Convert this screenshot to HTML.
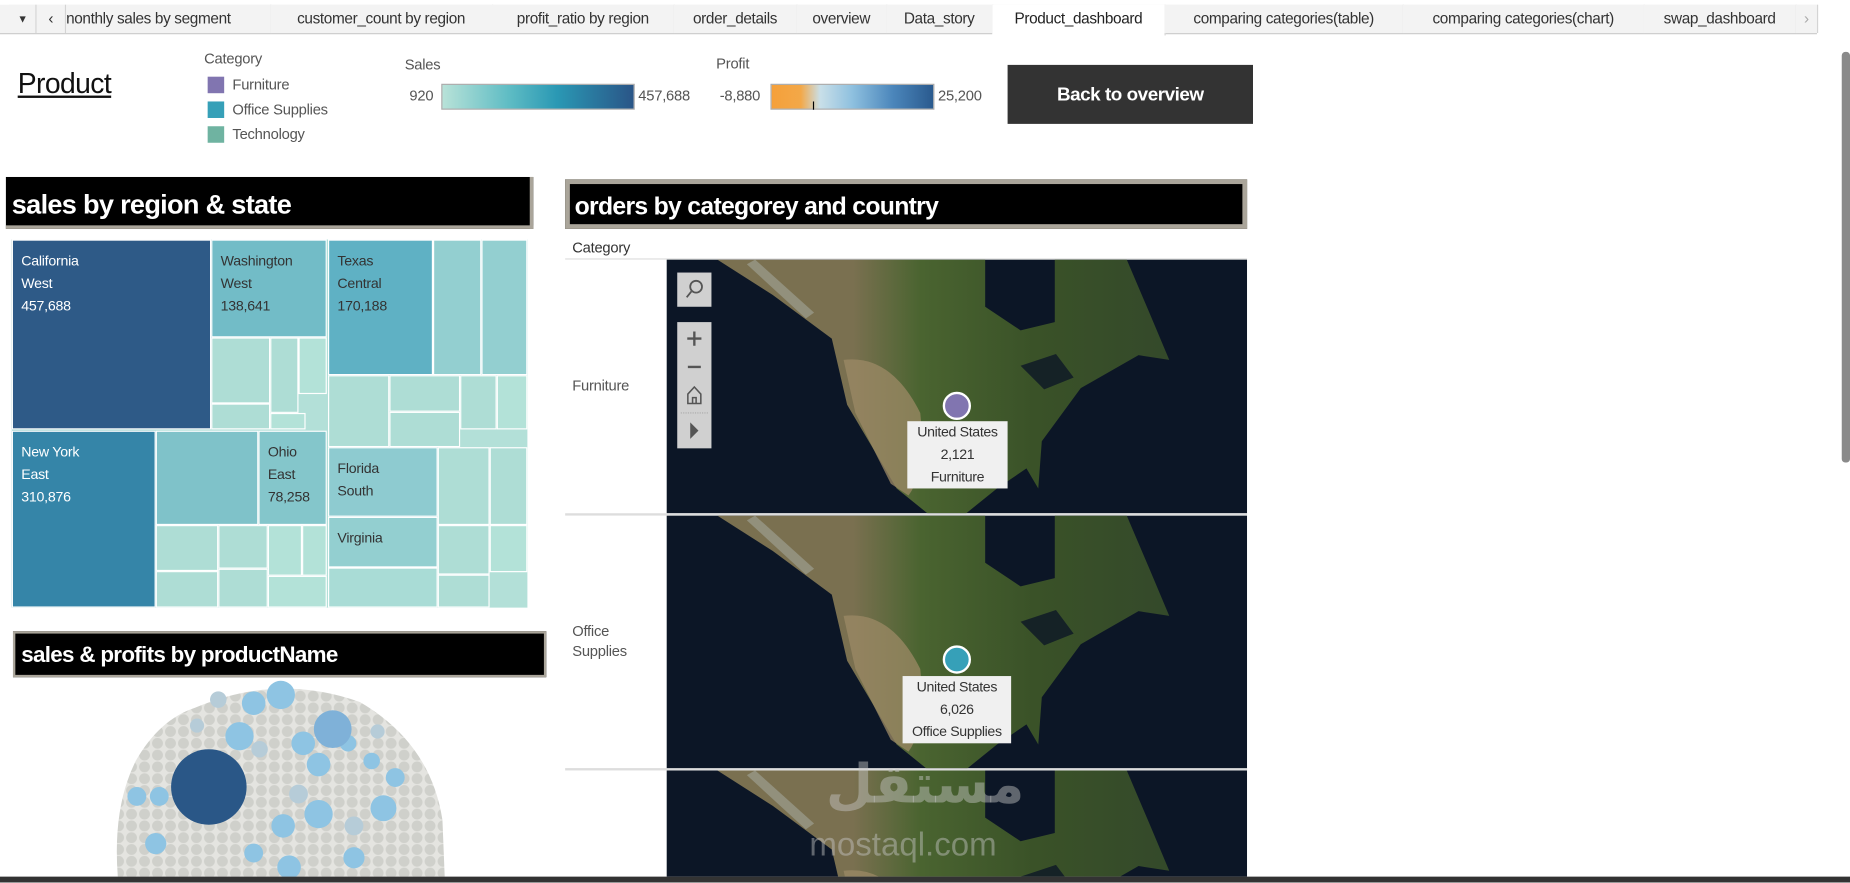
<!DOCTYPE html>
<html><head><meta charset="utf-8">
<style>
html,body{margin:0;padding:0;width:1850px;height:883px;overflow:hidden;background:#fff;font-family:"Liberation Sans",sans-serif}
#s{position:absolute;left:0;top:0;width:1568px;height:748px;overflow:hidden;transform:scale(1.17985);transform-origin:0 0}
.a{position:absolute}
.tab{position:absolute;top:4px;height:24px;line-height:24px;font-size:13px;letter-spacing:-0.3px;color:#333;border-right:1px solid #d4d4d4;text-align:center;background:#f3f3f3;white-space:nowrap;overflow:hidden}
.t{font-size:12.5px;color:#555;letter-spacing:-0.2px}
.cell{position:absolute;box-sizing:border-box;border:1px solid #fff;color:#fff;font-size:12px;line-height:19px;padding:8px 0 0 7px;letter-spacing:-0.2px;white-space:nowrap;overflow:hidden}
.bar{position:absolute;background:#000;color:#fff;font-weight:bold;box-sizing:border-box;white-space:nowrap;letter-spacing:-0.6px}
.tip{position:absolute;background:#f0f0f0;font-size:12px;color:#333;text-align:center;line-height:19px;letter-spacing:-0.3px}
</style></head><body><div id="s">
<div class="a" style="left:0;top:4px;width:1540px;height:24px;background:#f3f3f3;border-bottom:1px solid #ccc"></div>
<div class="tab" style="left:8px;width:22px;font-size:9px">▼</div>
<div class="tab" style="left:31px;width:24px">‹</div>
<div class="tab" style="left:56px;width:173px;text-align:left">nonthly sales by segment</div>
<div class="tab" style="left:229px;width:188px">customer_count by region</div>
<div class="tab" style="left:417px;width:154px">profit_ratio by region</div>
<div class="tab" style="left:571px;width:104px">order_details</div>
<div class="tab" style="left:675px;width:76px">overview</div>
<div class="tab" style="left:751px;width:90px">Data_story</div>
<div class="tab" style="left:841px;width:146px;background:#fff;height:26px;color:#222">Product_dashboard</div>
<div class="tab" style="left:987px;width:202px">comparing categories(table)</div>
<div class="tab" style="left:1189px;width:204px">comparing categories(chart)</div>
<div class="tab" style="left:1393px;width:129px">swap_dashboard</div>
<div class="tab" style="left:1522px;width:18px;color:#aaa">›</div>
<div class="a" style="left:1561px;top:44px;width:7px;height:348px;background:#8a8a8a;border-radius:3px"></div>

<div class="a" style="left:15px;top:58px;font-size:24px;color:#111;text-decoration:underline;letter-spacing:-0.5px">Product</div>
<div class="a t" style="left:173px;top:43px">Category</div>
<div class="a" style="left:176px;top:65px;width:14px;height:14px;background:#8175b0"></div><div class="a t" style="left:197px;top:65px">Furniture</div>
<div class="a" style="left:176px;top:86px;width:14px;height:14px;background:#36a0b8"></div><div class="a t" style="left:197px;top:86px">Office Supplies</div>
<div class="a" style="left:176px;top:107px;width:14px;height:14px;background:#6fb3a1"></div><div class="a t" style="left:197px;top:107px">Technology</div>
<div class="a t" style="left:343px;top:48px">Sales</div>
<div class="a t" style="left:347px;top:74px">920</div>
<div class="a" style="left:374px;top:71px;width:162px;height:20px;border:1px solid #aaa;background:linear-gradient(90deg,#b8e2d8,#5ebcc4 35%,#2a98b4 60%,#2a5587)"></div>
<div class="a t" style="left:541px;top:74px">457,688</div>
<div class="a t" style="left:607px;top:47px">Profit</div>
<div class="a t" style="left:610px;top:74px">-8,880</div>
<div class="a" style="left:653px;top:71px;width:137px;height:20px;border:1px solid #aaa;background:linear-gradient(90deg,#f5a03a,#f3a848 18%,#c9dfe8 30%,#8ec0df 50%,#4b86bb 75%,#2a5a8e)"></div>
<div class="a" style="left:689px;top:86px;width:1px;height:7px;background:#000"></div>
<div class="a t" style="left:795px;top:74px">25,200</div>
<div class="a" style="left:854px;top:55px;width:208px;height:50px;background:#333;color:#fff;font-weight:bold;font-size:16px;line-height:52px;text-align:center;letter-spacing:-0.4px">Back to overview</div>

<div class="bar" style="left:5px;top:150px;width:447px;height:44px;border-right:3px solid #aaa59a;border-bottom:3px solid #aaa59a;font-size:23px;line-height:46px;padding-left:5px">sales by region &amp; state</div>

<div class="a" style="left:10px;top:203px;width:437px;height:312px;background:#b3e0d8;overflow:hidden">
<div class="cell" style="left:0;top:0;width:169px;height:161px;background:#2e5a87">California<br>West<br>457,688</div>
<div class="cell" style="left:0;top:162px;width:122px;height:150px;background:#3585a8">New York<br>East<br>310,876</div>
<div class="cell" style="left:169px;top:0;width:98px;height:83px;background:#72bcc7;color:#333">Washington<br>West<br>138,641</div>
<div class="cell" style="left:169px;top:83px;width:50px;height:56px;background:#aeddd5"></div>
<div class="cell" style="left:219px;top:83px;width:24px;height:64px;background:#aeddd5"></div>
<div class="cell" style="left:243px;top:83px;width:24px;height:48px;background:#b3e2d8"></div>
<div class="cell" style="left:169px;top:139px;width:50px;height:22px;background:#aeddd5"></div>
<div class="cell" style="left:219px;top:147px;width:30px;height:14px;background:#b3e2d8"></div>
<div class="cell" style="left:268px;top:0;width:89px;height:115px;background:#5fb1c4;color:#333">Texas<br>Central<br>170,188</div>
<div class="cell" style="left:357px;top:0;width:41px;height:115px;background:#93cfd0"></div>
<div class="cell" style="left:398px;top:0;width:39px;height:115px;background:#93cfd0"></div>
<div class="cell" style="left:268px;top:115px;width:52px;height:61px;background:#aeddd5"></div>
<div class="cell" style="left:320px;top:115px;width:60px;height:31px;background:#aeddd5"></div>
<div class="cell" style="left:320px;top:146px;width:60px;height:30px;background:#aeddd5"></div>
<div class="cell" style="left:380px;top:115px;width:31px;height:46px;background:#aeddd5"></div>
<div class="cell" style="left:411px;top:115px;width:26px;height:46px;background:#b3e2d8"></div>
<div class="cell" style="left:268px;top:176px;width:93px;height:59px;background:#8ecbd0;color:#333">Florida<br>South</div>
<div class="cell" style="left:268px;top:235px;width:93px;height:43px;background:#93cfd0;color:#333">Virginia</div>
<div class="cell" style="left:268px;top:278px;width:93px;height:34px;background:#a9dcd6"></div>
<div class="cell" style="left:361px;top:176px;width:44px;height:66px;background:#aeddd5"></div>
<div class="cell" style="left:405px;top:176px;width:32px;height:66px;background:#aeddd5"></div>
<div class="cell" style="left:361px;top:242px;width:44px;height:42px;background:#aeddd5"></div>
<div class="cell" style="left:361px;top:284px;width:44px;height:28px;background:#aeddd5"></div>
<div class="cell" style="left:405px;top:242px;width:32px;height:40px;background:#b3e2d8"></div>
<div class="cell" style="left:122px;top:162px;width:87px;height:80px;background:#7fc2c9"></div>
<div class="cell" style="left:209px;top:162px;width:58px;height:80px;background:#84c6cb;color:#333">Ohio<br>East<br>78,258</div>
<div class="cell" style="left:122px;top:242px;width:53px;height:39px;background:#aeddd5"></div>
<div class="cell" style="left:175px;top:242px;width:42px;height:37px;background:#aeddd5"></div>
<div class="cell" style="left:122px;top:281px;width:53px;height:31px;background:#aeddd5"></div>
<div class="cell" style="left:175px;top:279px;width:42px;height:33px;background:#aeddd5"></div>
<div class="cell" style="left:217px;top:242px;width:29px;height:43px;background:#b3e2d8"></div>
<div class="cell" style="left:246px;top:242px;width:21px;height:43px;background:#b3e2d8"></div>
<div class="cell" style="left:217px;top:285px;width:50px;height:27px;background:#b3e2d8"></div>
</div>

<div class="bar" style="left:11px;top:535px;width:452px;height:39px;border:2px solid #aaa59a;font-size:19px;line-height:38px;padding-left:5px">sales &amp; profits by productName</div>
<svg class="a" style="left:95px;top:575px" width="290" height="168">
<defs><pattern id="p" width="11" height="10" patternUnits="userSpaceOnUse"><rect width="11" height="10" fill="#e4e4e0"/><circle cx="5.5" cy="5" r="4.6" fill="#cfd0cb"/></pattern></defs>
<path d="M70,25 Q140,-5 210,20 Q270,55 280,120 L282,170 L5,170 Q0,110 20,70 Q40,35 70,25Z" fill="url(#p)"/>
<g fill="#8ec4e3"><circle cx="143" cy="14" r="12"/><circle cx="120" cy="21" r="10"/><circle cx="108" cy="49" r="12"/><circle cx="162" cy="55" r="10"/><circle cx="175" cy="73" r="10"/><circle cx="230" cy="110" r="11"/><circle cx="240" cy="84" r="8"/><circle cx="175" cy="115" r="12"/><circle cx="145" cy="125" r="10"/><circle cx="21" cy="100" r="8"/><circle cx="40" cy="100" r="8"/><circle cx="37" cy="140" r="9"/><circle cx="150" cy="160" r="10"/><circle cx="120" cy="148" r="8"/><circle cx="205" cy="152" r="9"/><circle cx="200" cy="55" r="7"/><circle cx="220" cy="70" r="7"/></g>
<g fill="#b6ccd8"><circle cx="90" cy="18" r="7"/><circle cx="125" cy="60" r="7"/><circle cx="158" cy="98" r="8"/><circle cx="205" cy="125" r="8"/><circle cx="72" cy="40" r="6"/><circle cx="225" cy="45" r="6"/></g>
<circle cx="187" cy="43" r="16" fill="#7fb1d8"/>
<circle cx="82" cy="92" r="32" fill="#2a5787"/>
</svg>

<div class="bar" style="left:479px;top:152px;width:578px;height:42px;border:4px solid #aaa59a;font-size:21px;line-height:40px;padding-left:4px">orders by categorey and country</div>
<div class="a t" style="left:485px;top:203px;color:#333">Category</div>
<div class="a" style="left:479px;top:219px;width:578px;height:1px;background:#ddd"></div>
<div class="a t" style="left:485px;top:320px">Furniture</div>
<div class="a t" style="left:485px;top:527px;line-height:17px">Office<br>Supplies</div>
<div class="a" style="left:479px;top:435px;width:578px;height:2px;background:#ddd"></div>
<div class="a" style="left:479px;top:651px;width:578px;height:2px;background:#ddd"></div>

<svg width="0" height="0" style="position:absolute;left:0;top:0"><defs>
<linearGradient id="lg" x1="0" x2="1" y1="0" y2="0"><stop offset="0.3" stop-color="#7a7050"/><stop offset="0.45" stop-color="#4a6430"/><stop offset="0.7" stop-color="#3a5228"/><stop offset="1" stop-color="#34492a"/></linearGradient>
<g id="map"><rect width="492" height="215" fill="#0c1626"/>
<path d="M43,0 L90,30 L140,67 L153,123 L195,194 L221,215 L254,215 L280,194 L305,177 L315,194 L318,154 L351,109 L400,81 L426,85 L410,47 L390,0 L329,0 L329,53 L300,60 L270,40 L270,0 Z" fill="url(#lg)"/>
<path d="M150,85 Q190,80 215,130 Q220,180 205,200 L190,190 L160,130Z" fill="#9c8a66" opacity="0.75"/>
<path d="M75,0 L125,45 L118,50 L68,4Z" fill="#aab0a8" opacity="0.5"/>
<path d="M300,90 L330,80 L345,100 L320,110Z" fill="#0c1626" opacity="0.8"/>
</g></defs></svg>
<svg class="a" style="left:565px;top:220px" width="492" height="215"><use href="#map"/></svg>
<svg class="a" style="left:565px;top:437px" width="492" height="214"><use href="#map"/></svg>
<svg class="a" style="left:565px;top:653px" width="492" height="90"><use href="#map"/></svg>

<div class="a" style="left:574px;top:231px;width:29px;height:29px;background:#d0d0d0"><svg width="29" height="29"><circle cx="16" cy="12" r="5" fill="none" stroke="#555" stroke-width="1.5"/><path d="M12,16 L8,21" stroke="#555" stroke-width="1.5"/></svg></div>
<div class="a" style="left:574px;top:273px;width:29px;height:107px;background:#d0d0d0"><svg width="29" height="107"><path d="M14.5,8v12M8.5,14h12M9,38h11" stroke="#555" stroke-width="2"/><path d="M9,61 L14.5,55 L20,61 V69 H9Z M13,69 v-5 h3 v5" fill="none" stroke="#555" stroke-width="1.3"/><path d="M3,77h23" stroke="#aaa" stroke-dasharray="1,1"/><path d="M11,85 L18,92 L11,99Z" fill="#555"/></svg></div>

<div class="a" style="left:799px;top:332px;width:20px;height:20px;border-radius:50%;background:#8175b0;border:2px solid #fff"></div>
<div class="tip" style="left:769px;top:357px;width:85px;height:57px">United States<br>2,121<br>Furniture</div>
<div class="a" style="left:799px;top:547px;width:20px;height:20px;border-radius:50%;background:#36a0b8;border:2px solid #fff"></div>
<div class="tip" style="left:765px;top:573px;width:92px;height:57px">United States<br>6,026<br>Office Supplies</div>

<div class="a" style="left:700px;top:636px;font-size:46px;line-height:56px;font-weight:bold;color:rgba(200,200,200,0.45);font-family:'Liberation Sans','DejaVu Sans',sans-serif">مستقل</div>
<div class="a" style="left:686px;top:700px;font-size:28px;line-height:32px;color:rgba(200,200,200,0.45)">mostaql.com</div>

<div class="a" style="left:0;top:743px;width:1568px;height:5px;background:#333"></div>
</div></body></html>
